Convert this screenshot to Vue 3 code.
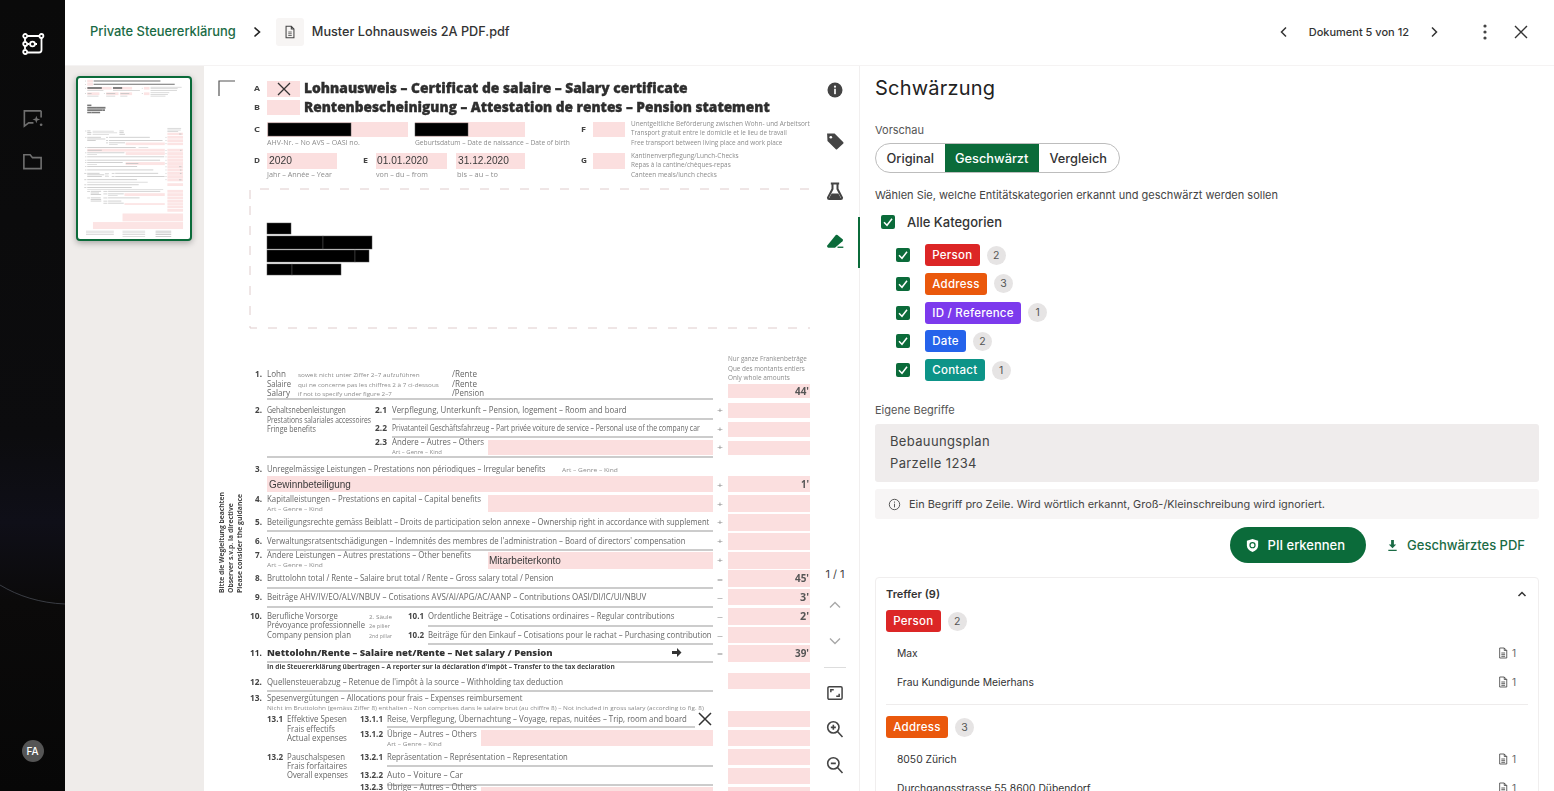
<template>
  <div class="app">
    <aside class="rail">
      <svg class="rail-curve" viewBox="0 0 65 791" aria-hidden="true">
        <path d="M0,585 C18,596 40,603 65,604" fill="none" stroke="#3a3d44" stroke-width="1" />
      </svg>
      <svg class="logo" viewBox="0 0 24 24" fill="none" stroke="#fff" stroke-width="1.8">
        <path d="M6,4 H19 M20.5,6 V18 Q20.5,20.5 18,20.5 H7 M4,6 V9.5 M4,14 V17 M6,12 H8.5 M13.5,12 H16" />
        <circle cx="4.2" cy="4" r="2" />
        <circle cx="20.4" cy="4" r="2" />
        <circle cx="4.2" cy="12" r="2" />
        <circle cx="4.2" cy="20" r="2" />
        <circle cx="11.5" cy="12" r="2.4" />
      </svg>
      <svg class="rail-icon first" viewBox="0 0 24 24" fill="none" stroke="#6f6f6f" stroke-width="1.7">
        <path d="M13,4 H3.5 V20 L8,16.5 H13 M21,4 H13 M21,4 V11" />
        <path d="M16,9 L17,12 L20,13 L17,14 L16,17 L15,14 L12,13 L15,12 Z" fill="#6f6f6f" stroke="none" />
        <circle cx="21" cy="18.5" r="1.4" fill="#6f6f6f" stroke="none" />
      </svg>
      <svg class="rail-icon" viewBox="0 0 24 24" fill="none" stroke="#6f6f6f" stroke-width="1.7">
        <path d="M3,5 H9.5 L12,8 H21 V19.5 H3 Z" />
      </svg>
      <div class="avatar">FA</div>
    </aside>

    <div class="main">
      <header class="topbar">
        <span class="crumb">Private Steuererklärung</span>
        <svg class="crumb-sep" viewBox="0 0 12 12" fill="none" stroke="#222" stroke-width="1.6">
          <path d="M3.5,1.5 L8.5,6 L3.5,10.5" />
        </svg>
        <span class="doc-box">
          <svg viewBox="0 0 16 16" fill="none" stroke="#444" stroke-width="1.2">
            <path d="M3.5,1.5 H9.5 L12.5,4.5 V14.5 H3.5 Z M9.5,1.5 V4.5 H12.5" />
            <path d="M6,8 H10 M6,10 H10 M6,12 H10" stroke-width=".9" />
          </svg>
        </span>
        <span class="doc-name">Muster Lohnausweis 2A PDF.pdf</span>
        <span class="pager">
          <svg viewBox="0 0 12 12" fill="none" stroke="#333" stroke-width="1.5"><path d="M8,1.5 L3.5,6 L8,10.5" /></svg>
          <span>Dokument 5 von 12</span>
          <svg viewBox="0 0 12 12" fill="none" stroke="#333" stroke-width="1.5"><path d="M4,1.5 L8.5,6 L4,10.5" /></svg>
        </span>
        <svg class="kebab" viewBox="0 0 4 16" fill="#444">
          <circle cx="2" cy="2" r="1.6" /><circle cx="2" cy="8" r="1.6" /><circle cx="2" cy="14" r="1.6" />
        </svg>
        <svg class="close" viewBox="0 0 14 14" fill="none" stroke="#333" stroke-width="1.4"><path d="M1,1 L13,13 M13,1 L1,13" /></svg>
      </header>

      <div class="body">
        <div class="thumbs">
          <div class="thumb">
            <svg viewBox="214 71 644 921" preserveAspectRatio="none">
              <rect v-for="(f, i) in thumbFields" :key="'f' + i" :x="f[0]" :y="f[1]" :width="f[2]" :height="f[3]" fill="#fce4e4" />
              <rect v-for="(b, i) in thumbBars" :key="'b' + i" :x="b.x" :y="b.y" :width="b.w" :height="b.h" :fill="b.c" />
            </svg>
          </div>
        </div>

        <div class="page">
          <svg viewBox="204 66 606 725" width="606" height="725">
            <rect v-for="(f, i) in fields" :key="'pf' + i" :x="f[0]" :y="f[1]" :width="f[2]" :height="f[3]" fill="#fbdfdf" />
            <rect v-for="(f, i) in blacks" :key="'pb' + i" :x="f[0]" :y="f[1]" :width="f[2]" :height="f[3]" fill="#000" stroke="#555" stroke-width=".5" />
            <path v-for="(l, i) in lines" :key="'pl' + i" :d="`M${l[0]},${l[2]} H${l[1]}`" stroke="#999" stroke-width="1" />

            <path d="M219,96 V81 H235" fill="none" stroke="#555" stroke-width="1.2" />
            <path d="M278,83 L290,95 M290,83 L278,95" stroke="#333" stroke-width="1.3" />
            <path d="M699,713 L711,725 M711,713 L699,725" stroke="#333" stroke-width="1.5" />
            <path d="M250,199 V189 H810 M250,206 V328 H810" fill="none" stroke="#dfcccc" stroke-width="1" stroke-dasharray="9 11" />
            <path d="M672,651 H677 V648 L681.5,652.5 L677,657 V654 H672 Z" fill="#333" />

            <text
              v-for="(t, i) in texts"
              :key="'t' + i"
              :transform="fit(t)"
              :font-size="t.s"
              :font-weight="t.b"
              :fill="t.c"
              :font-family="t.f"
              :stroke="t.s >= 14 ? t.c : 'none'"
              :stroke-width="t.s >= 14 ? 0.35 : 0"
            >{{ t.t }}</text>

            <text
              v-for="(v, i) in sideNotes"
              :key="'v' + i"
              :transform="fit(v)"
              :font-size="v.s"
              :font-weight="v.b"
              :fill="v.c"
              :font-family="v.f"
            >{{ v.t }}</text>
          </svg>
        </div>

        <nav class="tools">
          <svg class="tool" viewBox="0 0 24 24"><circle cx="12" cy="12" r="9" fill="#444" /><circle cx="12" cy="8" r="1.3" fill="#fff" /><rect x="11" y="10.5" width="2" height="6.5" fill="#fff" /></svg>
          <svg class="tool" viewBox="0 0 24 24"><path d="M2.5,3 H11.5 L22,13.5 Q22.5,14.5 22,15 L14.5,22 Q13.5,22.5 13,22 L3,12 Z" fill="#444" /><circle cx="7" cy="7.5" r="1.6" fill="#fff" /></svg>
          <svg class="tool" viewBox="0 0 24 24"><path d="M7,3 H17 M9,3.5 V9.5 L3.5,20 Q3.5,21.5 5,21.5 H19 Q20.5,21.5 20.5,20 L15,9.5 V3.5" fill="none" stroke="#444" stroke-width="2.4" /><path d="M8,15 H16 L19,20.5 H5 Z" fill="#444" /></svg>
          <div class="tool-active">
            <svg class="tool" viewBox="0 0 24 24"><path d="M13,3.5 Q14,3 15,3.5 L21.5,9 Q22,10 21,11 L12,19 H4 Q2,18.5 2.5,16.5 Z" fill="#0b6b3a" /><rect x="15" y="17.5" width="7" height="1.6" fill="#0b6b3a" /></svg>
          </div>
          <div class="tool-bottom">
            <span class="page-no">1 / 1</span>
            <svg class="mini" viewBox="0 0 14 14" fill="none" stroke="#a8a8a8" stroke-width="1.4"><path d="M2,9.5 L7,4.5 L12,9.5" /></svg>
            <svg class="mini last" viewBox="0 0 14 14" fill="none" stroke="#a8a8a8" stroke-width="1.4"><path d="M2,4.5 L7,9.5 L12,4.5" /></svg>
            <div class="tool-div"></div>
            <svg class="tool" viewBox="0 0 24 24" fill="none" stroke="#444" stroke-width="1.8"><rect x="3.5" y="4.5" width="17" height="15" rx="1.5" /><path d="M7,11 V8 H10.5 M17,13 V16 H13.5" /></svg>
            <svg class="tool" viewBox="0 0 24 24" fill="none" stroke="#444" stroke-width="1.9"><circle cx="10" cy="10" r="6.8" /><path d="M15,15 L21,21.5 M10,7 V13 M7,10 H13" /></svg>
            <svg class="tool" viewBox="0 0 24 24" fill="none" stroke="#444" stroke-width="1.9"><circle cx="10" cy="10" r="6.8" /><path d="M15,15 L21,21.5 M7,10 H13" /></svg>
          </div>
        </nav>

        <section class="panel">
          <h1>Schwärzung</h1>
          <label class="lbl">Vorschau</label>
          <div class="toggle">
            <span class="seg">Original</span>
            <span class="seg on">Geschwärzt</span>
            <span class="seg">Vergleich</span>
          </div>
          <p class="hint">Wählen Sie, welche Entitätskategorien erkannt und geschwärzt werden sollen</p>

          <div class="all-row">
            <span class="cb"><svg viewBox="0 0 14 14" fill="none" stroke="#fff" stroke-width="1.5"><path d="M3,7.3 L6,10.3 L11,3.8" /></svg></span>
            <span>Alle Kategorien</span>
          </div>
          <div v-for="c in cats" :key="c.name" class="cat-row">
            <span class="cb"><svg viewBox="0 0 14 14" fill="none" stroke="#fff" stroke-width="1.5"><path d="M3,7.3 L6,10.3 L11,3.8" /></svg></span>
            <span class="chip" :style="{ background: c.color }">{{ c.name }}</span>
            <span class="count">{{ c.count }}</span>
          </div>

          <label class="lbl terms-lbl">Eigene Begriffe</label>
          <div class="terms">Bebauungsplan<br />Parzelle 1234</div>
          <div class="info">
            <svg viewBox="0 0 16 16" fill="none" stroke="#555" stroke-width="1.2"><circle cx="8" cy="8" r="6.4" /><path d="M8,7 V11.5 M8,4.4 V5.8" /></svg>
            <span>Ein Begriff pro Zeile. Wird wörtlich erkannt, Groß-/Kleinschreibung wird ignoriert.</span>
          </div>

          <div class="actions">
            <button class="primary">
              <svg viewBox="0 0 16 16"><path d="M8,1 L14,3 V8 Q14,12.5 8,15 Q2,12.5 2,8 V3 Z" fill="#fff" /><circle cx="8" cy="7.7" r="2.7" fill="none" stroke="#0b6b3a" stroke-width="1.3" /></svg>
              PII erkennen
            </button>
            <button class="ghost">
              <svg viewBox="0 0 14 14" fill="#1a6b45"><path d="M5.5,1 H8.5 V6 H11 L7,10 L3,6 H5.5 Z M2.5,11.5 H11.5 V13 H2.5 Z" /></svg>
              Geschwärztes PDF
            </button>
          </div>

          <div class="hits">
            <div class="hits-head">
              <span>Treffer (9)</span>
              <svg viewBox="0 0 12 12" fill="none" stroke="#333" stroke-width="1.5"><path d="M2.5,8 L6,4.5 L9.5,8" /></svg>
            </div>
            <div v-for="(g, gi) in hitGroups" :key="g.name" class="hit-group" :class="{ divided: gi > 0 }">
              <div class="hit-title">
                <span class="chip" :style="{ background: g.color }">{{ g.name }}</span>
                <span class="count">{{ g.count }}</span>
              </div>
              <div v-for="item in g.items" :key="item" class="hit-row">
                <span>{{ item }}</span>
                <span class="hit-ref">
                  <svg viewBox="0 0 12 14" fill="none" stroke="#444" stroke-width="1"><path d="M2,1 H7.5 L10.5,4 V13 H2 Z M7.5,1 V4 H10.5 M4,7 H8.5 M4,9 H8.5 M4,11 H8.5" /></svg>
                  1
                </span>
              </div>
            </div>
          </div>
        </section>
      </div>
    </div>
  </div>
</template>

<script setup>
const cats = [
  { name: "Person", color: "#dc2626", count: 2 },
  { name: "Address", color: "#ea580c", count: 3 },
  { name: "ID / Reference", color: "#7c3aed", count: 1 },
  { name: "Date", color: "#2563eb", count: 2 },
  { name: "Contact", color: "#0d9488", count: 1 },
];

const hitGroups = [
  { name: "Person", color: "#dc2626", count: 2, items: ["Max", "Frau Kundigunde Meierhans"] },
  { name: "Address", color: "#ea580c", count: 3, items: ["8050 Zürich", "Durchgangsstrasse 55 8600 Dübendorf"] },
];

// pdf page, everything in screen coordinates: x, y, w, h
const rightCol = [
  [384, 14], [403, 15], [422, 15], [441, 14], [476, 16], [495, 17], [514, 17], [533, 17], [552, 17],
  [570, 17], [589, 16], [608, 17], [627, 16], [645, 17], [673, 16], [711, 16], [730, 16], [749, 16], [768, 16], [787, 10],
];
const fields = [
  [267, 81, 33, 16], [267, 100, 33, 15],
  [267, 122, 141, 15], [415, 122, 110, 15], [593, 122, 32, 15],
  [267, 153, 70, 16], [376, 153, 71, 16], [456, 153, 69, 16], [593, 153, 32, 16],
  [488, 440, 225, 15], [267, 476, 446, 16], [488, 495, 225, 17], [488, 552, 225, 17],
  [481, 730, 232, 16], [481, 787, 232, 10],
  ...rightCol.map((r) => [728, r[0], 90, r[1]]),
];
const blacks = [
  [268, 123, 83, 13], [415, 123, 53, 13],
  [267, 223, 24, 11], [267, 236, 56, 13], [323, 236, 49, 13], [267, 250, 88, 12], [355, 250, 14, 12],
  [267, 264, 25, 11], [292, 264, 49, 11],
];
const lines = [
  [267, 713, 399], [392, 713, 419], [392, 713, 437], [267, 713, 457], [267, 713, 531], [267, 713, 550], [267, 713, 588],
  [267, 713, 607], [428, 713, 626], [428, 713, 644], [267, 713, 662], [267, 713, 691], [387, 695, 727], [387, 713, 766], [387, 713, 785],
];

const SANS = "Open Sans, sans-serif";
const ARIAL = "Liberation Sans, sans-serif";
const GREY = "#666";
const FAINT = "#8c8c8c";

function tx(x, end, y, s, t, opts = {}) {
  return { x, y, s, t, w: end - x, b: opts.b || 400, c: opts.c || GREY, f: opts.f || SANS };
}

// squeeze each line to the width it has on the scanned form
const ctx = document.createElement("canvas").getContext("2d");
function fit(t) {
  ctx.font = `${t.b} ${t.s}px ${t.f}`;
  const sx = (t.w / ctx.measureText(t.t).width).toFixed(3);
  const turn = t.rot ? ` rotate(${t.rot})` : "";
  return `translate(${t.x},${t.y})${turn} scale(${sx},1)`;
}

const title = { b: 800, c: "#2e2e2e" };
const bold = { b: 700, c: "#444" };
const small = { c: FAINT };
const value = { f: ARIAL, c: "#3a3a3a" };
const amount = { b: 700, c: "#555" };
const signs = [
  [413, "+"], [432, "+"], [450, "+"], [488, "+"], [507, "+"], [525, "+"], [544, "+"], [563, "+"],
  [582, "="], [600, "–"], [619, "–"], [638, "–"], [656, "="],
];

const texts = [
  tx(304, 688, 93, 14, "Lohnausweis – Certificat de salaire – Salary certificate", title),
  tx(304, 770, 112, 14, "Rentenbescheinigung – Attestation de rentes – Pension statement", title),
  tx(254, 260, 91, 7.5, "A", bold), tx(254, 260, 110, 7.5, "B", bold), tx(254, 260, 132, 7.5, "C", bold),
  tx(254, 260, 163, 7.5, "D", bold), tx(363, 368, 163, 7.5, "E", bold), tx(581, 586, 132, 7.5, "F", bold), tx(581, 587, 163, 7.5, "G", bold),
  tx(267, 360, 145, 7, "AHV-Nr. – No AVS – OASI no.", small),
  tx(415, 570, 145, 7, "Geburtsdatum – Date de naissance – Date of birth", small),
  tx(631, 810, 126, 7, "Unentgeltliche Beförderung zwischen Wohn- und Arbeitsort", small),
  tx(631, 787, 135, 7, "Transport gratuit entre le domicile et le lieu de travail", small),
  tx(631, 783, 145, 7, "Free transport between living place and work place", small),
  tx(631, 739, 158, 7, "Kantinenverpflegung/Lunch-Checks", small),
  tx(631, 731, 167, 7, "Repas à la cantine/chèques-repas", small),
  tx(631, 717, 177, 7, "Canteen meals/lunch checks", small),
  tx(267, 332, 177, 7, "Jahr – Année – Year", small),
  tx(376, 428, 177, 7, "von – du – from", small),
  tx(457, 498, 177, 7, "bis – au – to", small),
  tx(269, 292, 164, 10.5, "2020", value),
  tx(377, 428, 164, 10.5, "01.01.2020", value),
  tx(458, 509, 164, 10.5, "31.12.2020", value),

  tx(255, 262, 377, 8, "1.", bold),
  tx(267, 286, 377, 9.5, "Lohn"), tx(267, 291, 387, 9.5, "Salaire"), tx(267, 290, 396, 9.5, "Salary"),
  tx(298, 420, 377, 6, "soweit nicht unter Ziffer 2–7 aufzuführen", small),
  tx(298, 439, 387, 6, "qui ne concerne pas les chiffres 2 à 7 ci-dessous", small),
  tx(298, 392, 396, 6, "if not to specify under figure 2–7", small),
  tx(452, 477, 377, 9, "/Rente"), tx(452, 477, 387, 9, "/Rente"), tx(452, 484, 396, 9, "/Pension"),
  tx(728, 807, 361, 7, "Nur ganze Frankenbeträge", small),
  tx(728, 805, 371, 7, "Que des montants entiers", small),
  tx(728, 790, 380, 7, "Only whole amounts", small),
  tx(795, 809, 395, 10, "44'", amount),

  tx(255, 262, 413, 8, "2.", bold),
  tx(267, 346, 413, 8.8, "Gehaltsnebenleistungen"),
  tx(267, 371, 423, 8.8, "Prestations salariales accessoires"),
  tx(267, 316, 432, 8.8, "Fringe benefits"),
  tx(375, 387, 413, 8, "2.1", bold),
  tx(392, 627, 413, 8.8, "Verpflegung, Unterkunft – Pension, logement – Room and board"),
  tx(375, 387, 431, 8, "2.2", bold),
  tx(392, 700, 431, 8.8, "Privatanteil Geschäftsfahrzeug – Part privée voiture de service – Personal use of the company car"),
  tx(375, 387, 445, 8, "2.3", bold),
  tx(392, 484, 445, 8.8, "Andere – Autres – Others"),
  tx(392, 442, 454, 6, "Art – Genre – Kind", small),

  tx(255, 262, 472, 8, "3.", bold),
  tx(267, 546, 472, 8.8, "Unregelmässige Leistungen – Prestations non périodiques – Irregular benefits"),
  tx(562, 618, 472, 6, "Art – Genre – Kind", small),
  tx(269, 351, 488, 10.5, "Gewinnbeteiligung", value),
  tx(801, 809, 488, 10, "1'", amount),
  tx(255, 262, 502, 8, "4.", bold),
  tx(267, 481, 502, 8.8, "Kapitalleistungen – Prestations en capital – Capital benefits"),
  tx(267, 323, 511, 6, "Art – Genre – Kind", small),
  tx(255, 262, 525, 8, "5.", bold),
  tx(267, 710, 525, 8.8, "Beteiligungsrechte gemäss Beiblatt – Droits de participation selon annexe – Ownership right in accordance with supplement"),
  tx(255, 262, 544, 8, "6.", bold),
  tx(267, 686, 544, 8.8, "Verwaltungsratsentschädigungen – Indemnités des membres de l'administration – Board of directors' compensation"),
  tx(255, 262, 558, 8, "7.", bold),
  tx(267, 471, 558, 8.8, "Andere Leistungen – Autres prestations – Other benefits"),
  tx(267, 323, 567, 6, "Art – Genre – Kind", small),
  tx(489, 561, 564, 10, "Mitarbeiterkonto", value),
  tx(255, 262, 581, 8, "8.", bold),
  tx(267, 554, 581, 8.8, "Bruttolohn total / Rente – Salaire brut total / Rente – Gross salary total / Pension"),
  tx(795, 809, 582, 10, "45'", amount),
  tx(255, 262, 600, 8, "9.", bold),
  tx(267, 647, 600, 8.8, "Beiträge AHV/IV/EO/ALV/NBUV – Cotisations AVS/AI/APG/AC/AANP – Contributions OASI/DI/IC/UI/NBUV"),
  tx(800, 809, 601, 10, "3'", amount),

  tx(250, 262, 619, 8, "10.", bold),
  tx(267, 338, 619, 8.8, "Berufliche Vorsorge"),
  tx(267, 365, 628, 8.8, "Prévoyance professionnelle"),
  tx(267, 351, 638, 8.8, "Company pension plan"),
  tx(369, 392, 619, 6, "2. Säule", small), tx(369, 390, 628, 6, "2e pilier", small), tx(369, 392, 638, 6, "2nd pillar", small),
  tx(408, 424, 619, 8, "10.1", bold),
  tx(428, 675, 619, 8.8, "Ordentliche Beiträge – Cotisations ordinaires – Regular contributions"),
  tx(800, 809, 620, 10, "2'", amount),
  tx(408, 424, 638, 8, "10.2", bold),
  tx(428, 712, 638, 8.8, "Beiträge für den Einkauf – Cotisations pour le rachat – Purchasing contribution"),
  tx(250, 262, 656, 8.5, "11.", { b: 700, c: "#333" }),
  tx(267, 553, 656, 9, "Nettolohn/Rente – Salaire net/Rente – Net salary / Pension", { b: 800, c: "#333" }),
  tx(795, 809, 657, 10, "39'", amount),
  tx(267, 615, 669, 6.4, "In die Steuererklärung übertragen – A reporter sur la déclaration d'impôt – Transfer to the tax declaration", { b: 700, c: "#444" }),
  tx(250, 262, 685, 8, "12.", bold),
  tx(267, 563, 685, 8.8, "Quellensteuerabzug – Retenue de l'impôt à la source – Withholding tax deduction"),
  tx(250, 262, 701, 8, "13.", bold),
  tx(267, 523, 701, 8.8, "Spesenvergütungen – Allocations pour frais – Expenses reimbursement"),
  tx(267, 704, 710, 5.5, "Nicht im Bruttolohn (gemäss Ziffer 8) enthalten – Non comprises dans le salaire brut (au chiffre 8) – Not included in gross salary (according to fig. 8)", small),
  tx(267, 283, 722, 8, "13.1", bold),
  tx(287, 347, 722, 8.8, "Effektive Spesen"), tx(287, 335, 732, 8.8, "Frais effectifs"), tx(287, 347, 741, 8.8, "Actual expenses"),
  tx(360, 383, 722, 8, "13.1.1", bold),
  tx(387, 687, 722, 8.8, "Reise, Verpflegung, Übernachtung – Voyage, repas, nuitées – Trip, room and board"),
  tx(360, 383, 737, 8, "13.1.2", bold),
  tx(387, 477, 737, 8.8, "Übrige – Autres – Others"),
  tx(387, 442, 746, 6, "Art – Genre – Kind", small),
  tx(267, 283, 760, 8, "13.2", bold),
  tx(287, 345, 760, 8.8, "Pauschalspesen"), tx(287, 347, 769, 8.8, "Frais forfaitaires"), tx(287, 348, 778, 8.8, "Overall expenses"),
  tx(360, 383, 760, 8, "13.2.1", bold),
  tx(387, 568, 760, 8.8, "Repräsentation – Représentation – Representation"),
  tx(360, 383, 778, 8, "13.2.2", bold),
  tx(387, 463, 778, 8.8, "Auto – Voiture – Car"),
  tx(360, 383, 790, 8, "13.2.3", bold),
  tx(387, 477, 790, 8.8, "Übrige – Autres – Others"),
  ...signs.map((m) => tx(717, 723, m[0], 8, m[1], { c: FAINT })),
];

const sideNotes = [
  [224, "Bitte die Wegleitung beachten", 101],
  [233, "Observer s.v.p. la directive", 90],
  [242, "Please consider the guidance", 99],
].map(([x, t, w]) => ({ ...tx(x, x + w, 593, 6.6, t, bold), rot: -90 }));

// thumbnail: same page at a small scale, text reduced to grey bars
const thumbFields = [
  ...fields,
  [728, 800, 90, 16], [728, 820, 90, 16], [470, 846, 348, 45], [300, 895, 518, 40],
];
const thumbBars = [
  ...texts.map((t) => ({ x: t.x, y: t.y - t.s * 0.6, w: t.w, h: t.s * 0.5, c: t.s >= 14 ? "#8a8a8a" : "#c4c4c4" })),
  ...blacks.map((b) => ({ x: b[0], y: b[1], w: b[2], h: b[3] * 0.8, c: "#777" })),
  ...[945, 955, 965].map((y) => ({ x: 260, y, w: 160, h: 4, c: "#cfcfcf" })),
  ...[945, 955, 965, 975].map((y) => ({ x: 470, y, w: 130, h: 4, c: "#cfcfcf" })),
  ...[945, 955, 965, 975].map((y) => ({ x: 660, y, w: 90, h: 4, c: "#bbb" })),
];
</script>

<style>
html,
body {
  margin: 0;
  height: 100%;
  overflow: hidden;
}
</style>

<style scoped>
.app {
  display: flex;
  height: 791px;
  width: 1554px;
  overflow: hidden;
  font-family: Inter, "Liberation Sans", sans-serif;
  color: #222;
  background: #fff;
}

/* left rail */
.rail {
  position: relative;
  width: 65px;
  flex: none;
  display: flex;
  flex-direction: column;
  align-items: center;
  background: linear-gradient(180deg, #0a0a0a 0%, #0c0c0e 55%, #0f0f18 66%, #0b0a0a 76%, #070707 100%);
  box-sizing: border-box;
  padding-top: 32px;
}
.rail-curve {
  position: absolute;
  left: 0;
  top: 0;
  width: 65px;
  height: 791px;
}
.logo {
  width: 24px;
  height: 24px;
}
.rail-icon {
  width: 23px;
  height: 23px;
  margin-top: 20px;
}
.rail-icon.first {
  margin-top: 51px;
}
.avatar {
  margin-top: auto;
  margin-bottom: 29px;
  width: 22px;
  height: 22px;
  border-radius: 50%;
  background: #555;
  color: #fff;
  font-size: 10px;
  font-weight: 500;
  display: flex;
  align-items: center;
  justify-content: center;
}

.main {
  flex: 1;
  min-width: 0;
  display: flex;
  flex-direction: column;
}

/* top bar */
.topbar {
  height: 66px;
  flex: none;
  box-sizing: border-box;
  border-bottom: 1px solid #f5f3f3;
  display: flex;
  align-items: center;
  padding: 0 26px 2px 25px;
  font-size: 13px;
}
.crumb {
  color: #1a6b45;
  font-weight: 500;
  font-size: 12.9px;
}
.crumb-sep {
  width: 12px;
  height: 12px;
  margin: 0 13px 0 15px;
}
.doc-box {
  width: 28px;
  height: 28px;
  background: #f7f5f4;
  border-radius: 3px;
  display: flex;
  align-items: center;
  justify-content: center;
}
.doc-box svg {
  width: 14px;
  height: 14px;
}
.doc-name {
  margin-left: 8px;
  font-weight: 500;
  font-size: 12.7px;
  color: #333;
}
.pager {
  margin-left: auto;
  display: flex;
  align-items: center;
  gap: 19px;
  font-size: 11px;
  font-weight: 500;
  color: #333;
}
.pager svg {
  width: 12px;
  height: 12px;
}
.kebab {
  width: 4px;
  height: 16px;
  margin-left: 43px;
}
.close {
  width: 14px;
  height: 14px;
  margin-left: 27px;
}

.body {
  flex: 1;
  min-height: 0;
  display: flex;
}

/* thumbnails */
.thumbs {
  width: 139px;
  flex: none;
  background: #efecea;
  box-sizing: border-box;
  padding: 10px 0 0 11px;
}
.thumb {
  width: 116px;
  height: 165px;
  box-sizing: border-box;
  border: 2px solid #0b6b3a;
  border-radius: 4px;
  background: #fff;
  box-shadow: 0 2px 6px rgba(0, 0, 0, 0.3);
  overflow: hidden;
}
.thumb svg {
  display: block;
  width: 100%;
  height: 100%;
  filter: blur(0.6px);
}

/* pdf page */
.page {
  width: 611px;
  flex: none;
  overflow: hidden;
  background: #fff;
}
.page svg {
  display: block;
  filter: blur(0.4px);
}

/* tool strip */
.tools {
  width: 45px;
  flex: none;
  box-sizing: border-box;
  border-right: 1px solid #f1efef;
  display: flex;
  flex-direction: column;
  align-items: center;
  padding: 14px 4px 0 0;
}
.tool {
  width: 20px;
  height: 20px;
  display: block;
}
.tools > .tool {
  margin-bottom: 30.5px;
}
.tool-active {
  align-self: stretch;
  height: 51px;
  margin-top: -15px;
  margin-right: -5px;
  padding-right: 4px;
  border-right: 2px solid #0b6b3a;
  display: flex;
  align-items: center;
  justify-content: center;
}
.tool-bottom {
  margin-top: auto;
  display: flex;
  flex-direction: column;
  align-items: center;
  padding-bottom: 16px;
}
.page-no {
  font-size: 11px;
  color: #444;
  margin-bottom: 17px;
}
.mini {
  width: 14px;
  height: 14px;
  margin-bottom: 22px;
}
.mini.last {
  margin-bottom: 19px;
}
.tool-div {
  width: 22px;
  height: 1px;
  background: #ddd;
  margin-bottom: 15px;
}
.tool-bottom .tool {
  margin-bottom: 16px;
}
.tool-bottom .tool:last-child {
  margin-bottom: 0;
}

/* right panel */
.panel {
  flex: 1;
  min-width: 0;
  box-sizing: border-box;
  padding: 10px 15px 0 15px;
  overflow: hidden;
}
h1 {
  margin: 0;
  font-size: 20px;
  font-weight: 400;
  line-height: 24px;
  letter-spacing: 0.2px;
  color: #222;
}
.lbl {
  display: block;
  font-size: 11px;
  line-height: 14px;
  color: #555;
}
.panel > .lbl:first-of-type {
  margin-top: 23px;
}
.toggle {
  display: inline-flex;
  margin-top: 6px;
  height: 30px;
  box-sizing: border-box;
  border: 1px solid #bdbdbd;
  border-radius: 15px;
  overflow: hidden;
  vertical-align: top;
}
.seg {
  display: flex;
  align-items: center;
  padding: 0 10.5px;
  font-size: 12.8px;
  font-weight: 500;
  color: #333;
}
.seg:last-child {
  padding-right: 12px;
}
.seg.on {
  background: #0b6b3a;
  color: #fff;
}
.hint {
  margin: 14px 0 0;
  font-size: 11px;
  line-height: 16px;
  color: #444;
}
.all-row {
  display: flex;
  align-items: center;
  gap: 12px;
  margin: 9px 0 0 6px;
  height: 20px;
  font-size: 13px;
  font-weight: 500;
  color: #333;
}
.cb {
  width: 14px;
  height: 14px;
  border-radius: 2px;
  background: #0b6b3a;
  flex: none;
}
.cb svg {
  display: block;
  width: 14px;
  height: 14px;
}
.cat-row {
  display: flex;
  align-items: center;
  height: 22px;
  margin: 6.8px 0 0 21px;
}
.all-row + .cat-row {
  margin-top: 12px;
}
.chip {
  display: inline-flex;
  align-items: center;
  height: 22px;
  padding: 0 7.3px;
  border-radius: 3px;
  color: #fff;
  font-size: 11.5px;
  font-weight: 500;
  letter-spacing: 0.25px;
}
.cat-row .chip {
  margin-left: 15px;
}
.count {
  width: 19px;
  height: 19px;
  margin-left: 7px;
  border-radius: 50%;
  background: #e6e4e4;
  color: #555;
  font-size: 10.5px;
  display: flex;
  align-items: center;
  justify-content: center;
}
.terms-lbl {
  margin-top: 22px;
}
.terms {
  margin-top: 7px;
  height: 58px;
  box-sizing: border-box;
  padding: 6px 15px;
  background: #efecec;
  border-radius: 3px;
  font-size: 13px;
  line-height: 22px;
  letter-spacing: 0.35px;
  color: #444;
}
.info {
  margin-top: 7px;
  height: 30px;
  box-sizing: border-box;
  padding: 0 13px;
  display: flex;
  align-items: center;
  gap: 8px;
  background: #f7f5f5;
  border-radius: 3px;
  font-size: 10.9px;
  color: #444;
}
.info svg {
  width: 13px;
  height: 13px;
  flex: none;
}
.actions {
  display: flex;
  justify-content: flex-end;
  align-items: center;
  gap: 20px;
  margin-top: 8px;
  padding-right: 14px;
}
.actions button {
  border: 0;
  font-family: inherit;
  font-size: 13px;
  font-weight: 500;
  display: flex;
  align-items: center;
  height: 36px;
  cursor: pointer;
}
.primary {
  background: #0b6b3a;
  color: #fff;
  border-radius: 18px;
  padding: 0 21px 0 15px;
  gap: 8px;
}
.primary svg {
  width: 15px;
  height: 15px;
}
.ghost {
  background: none;
  color: #1a6b45;
  padding: 0;
  gap: 8px;
}
.ghost svg {
  width: 13px;
  height: 13px;
}
.hits {
  margin-top: 14px;
  border: 1px solid #f0eeee;
  border-radius: 4px;
  padding: 0 10px;
}
.hits-head {
  display: flex;
  justify-content: space-between;
  align-items: center;
  height: 32px;
  font-size: 11px;
  font-weight: 600;
  color: #333;
}
.hits-head svg {
  width: 12px;
  height: 12px;
}
.hit-title {
  display: flex;
  align-items: center;
}
.hit-group.divided {
  margin-top: 8px;
  padding-top: 11px;
  border-top: 1px solid #eeecec;
}
.hit-row {
  display: flex;
  justify-content: space-between;
  align-items: center;
  height: 29px;
  padding: 0 12px 0 11px;
  font-size: 10.3px;
  color: #333;
}
.hit-title + .hit-row {
  margin-top: 6px;
}
.hit-ref {
  display: flex;
  align-items: center;
  gap: 4px;
  font-size: 10px;
  color: #666;
}
.hit-ref svg {
  width: 10px;
  height: 12px;
}
</style>
